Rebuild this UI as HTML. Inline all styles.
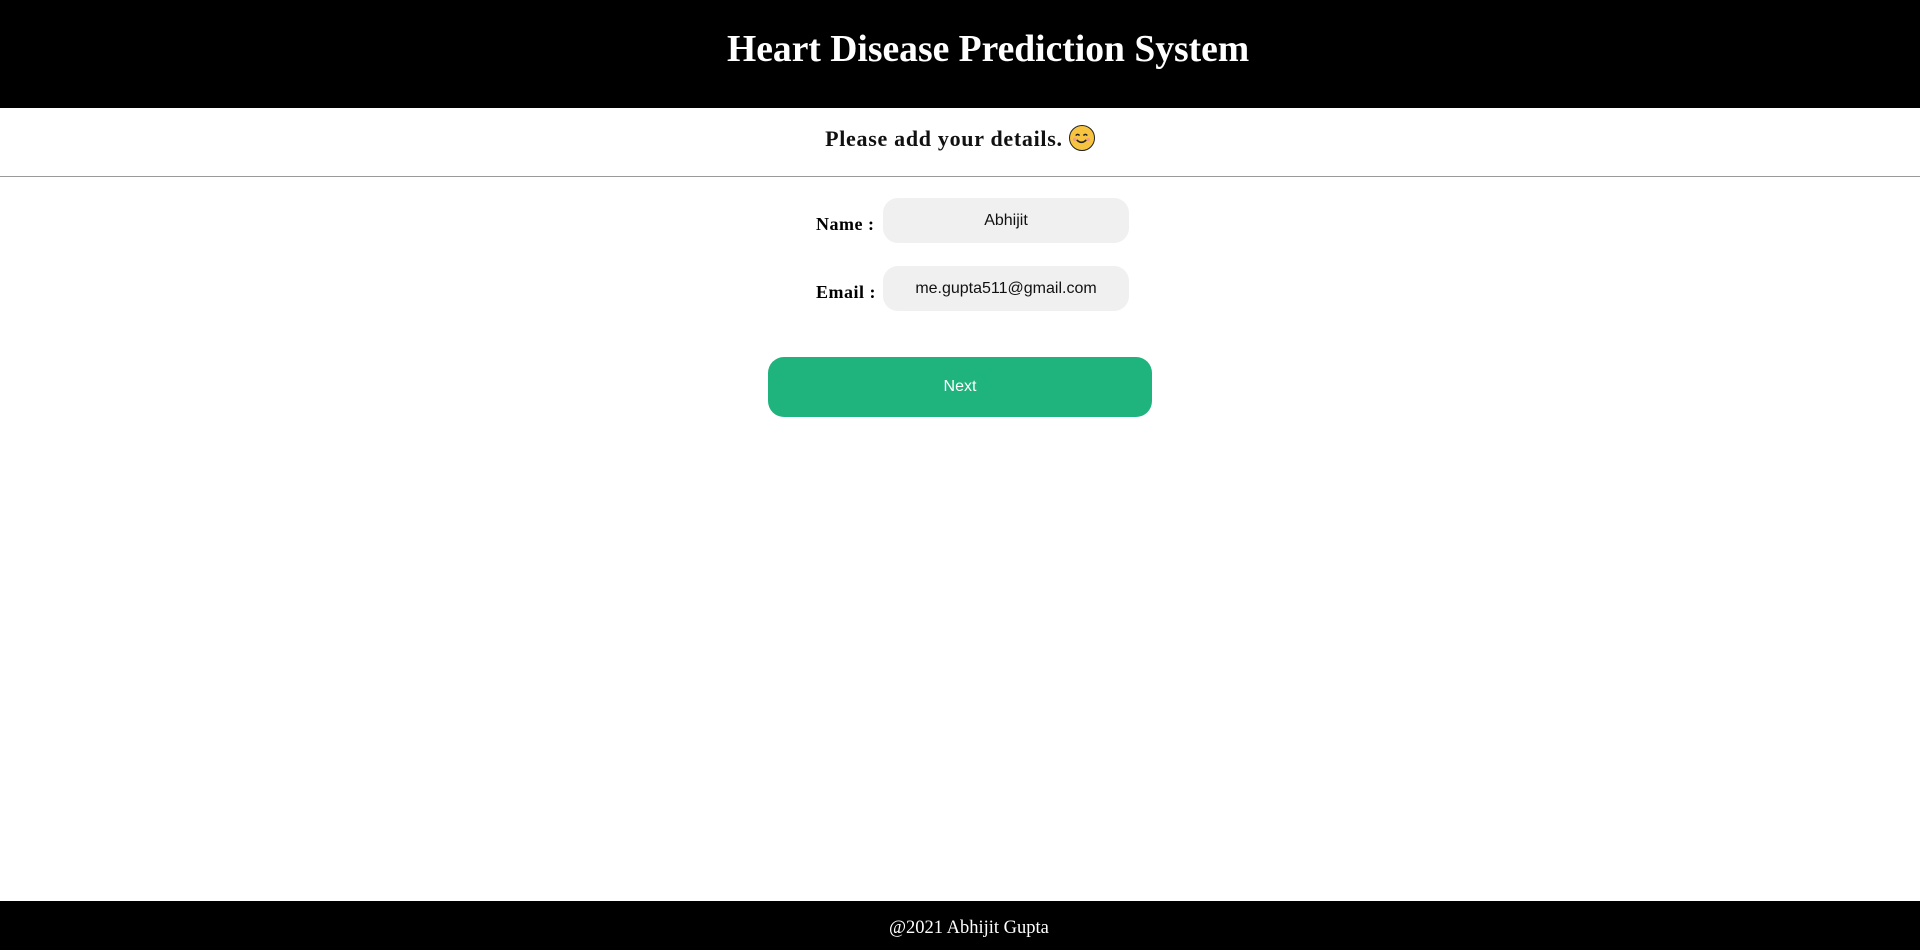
<!DOCTYPE html>
<html><head><meta charset="utf-8"><style>
html,body{margin:0;padding:0;width:1920px;height:950px;overflow:hidden;background:#fff;position:relative;font-family:"Liberation Serif",serif}
.hdr{position:absolute;left:0;top:0;width:1920px;height:108px;background:#000}
.hdr h1{position:absolute;left:727px;top:0;margin:0;width:500px;text-align:left;color:#fff;font:bold 37.6px "Liberation Serif",serif;line-height:100px;white-space:nowrap}
.sub{position:absolute;left:0;top:125px;width:1920px;text-align:center;font:bold 22px "Liberation Serif",serif;letter-spacing:0.7px;color:#111}
.emo{display:inline-block;width:26px;height:26px;border-radius:50%;background:#f7c442;border:1.5px solid #222;vertical-align:-5px;position:relative;box-sizing:border-box}
.hr{position:absolute;left:0;top:176px;width:1920px;height:1px;background:#9a9a9a}
.lbl{position:absolute;left:816px;font:bold 18px "Liberation Serif",serif;color:#000;letter-spacing:0.5px}
.inp{position:absolute;left:883px;width:246px;height:45px;border-radius:15px;background:#f0f0f0;text-align:center;font:16px "Liberation Sans",sans-serif;line-height:46px;color:#111}
.btn{position:absolute;left:768px;top:357px;width:384px;height:60px;border-radius:16px;background:#1fb37d;color:#fff;text-align:center;font:16px "Liberation Sans",sans-serif;line-height:60px}
.ftr{position:absolute;left:0;top:901px;width:1920px;height:49px;background:#000;color:#fff;font:18.5px "Liberation Serif",serif;line-height:54px}
.ftr span{position:absolute;left:889px}
</style></head><body>
<div class="hdr"><h1>Heart Disease Prediction System</h1></div>
<div class="sub">Please add your details. <span class="emo"><svg width="23" height="23" viewBox="0 0 24 24" style="position:absolute;left:0;top:0"><path d="M6 10 Q8 7.5 10 10 M14 10 Q16 7.5 18 10" stroke="#222" stroke-width="1.6" fill="none"/><path d="M7 14.5 Q12 19.5 17 14.5" stroke="#222" stroke-width="1.6" fill="none"/><circle cx="5" cy="14" r="1.8" fill="#f39a8a"/><circle cx="19" cy="14" r="1.8" fill="#f39a8a"/></svg></span></div>
<div class="hr"></div>
<div class="lbl" style="top:214px">Name :</div>
<div class="inp" style="top:198px">Abhijit</div>
<div class="lbl" style="top:282px">Email :</div>
<div class="inp" style="top:266px">me.gupta511@gmail.com</div>
<div class="btn">Next</div>
<div class="ftr"><span>@2021 Abhijit Gupta</span></div>
</body></html>
